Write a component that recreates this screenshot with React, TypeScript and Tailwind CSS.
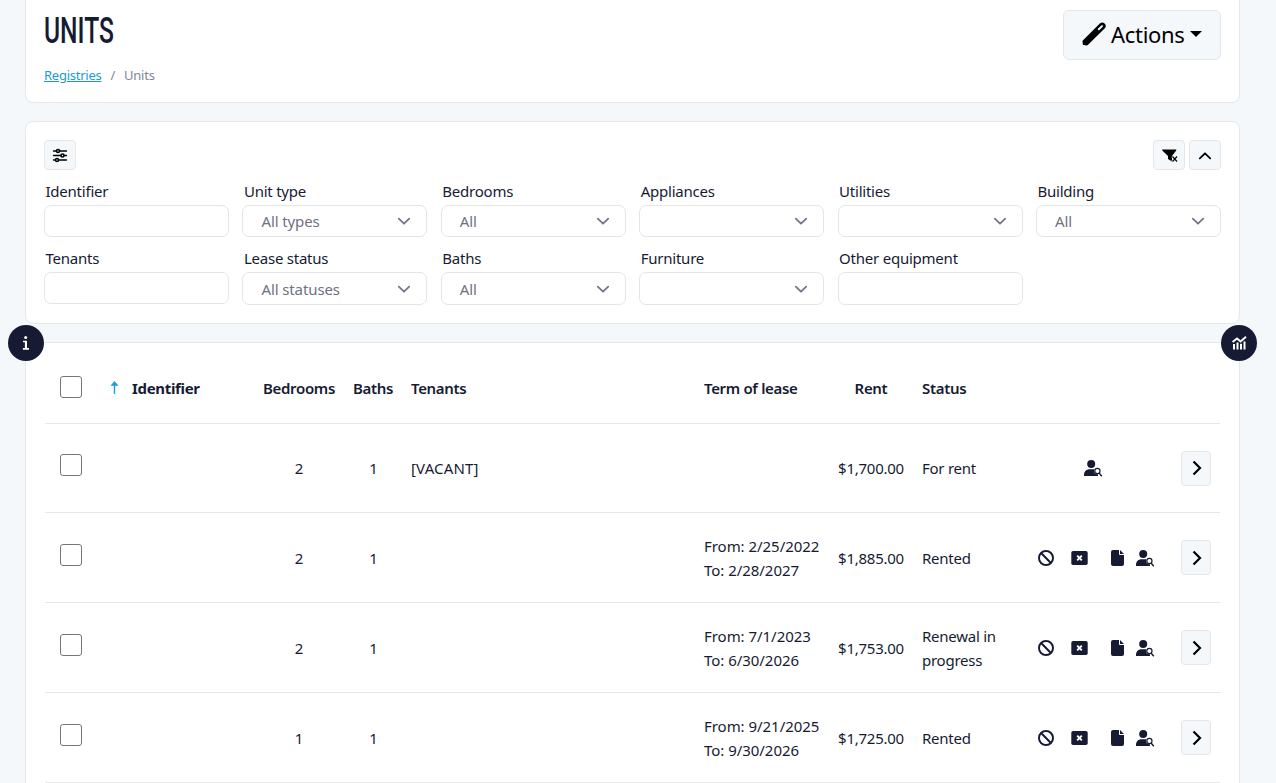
import React from "react";
import { FaBan } from "react-icons/fa6";

const Chevron = ({ className }: { className?: string }) => (
  <svg width="14" height="9" viewBox="0 0 14 9" fill="none" stroke="currentColor" strokeWidth="1.8" strokeLinecap="round" strokeLinejoin="round" className={className}>
    <path d="M1.8 1.6 7 6.700l5.200-5.100" />
  </svg>
);

const Pencil = () => (
  <svg width="24" height="24" viewBox="0 0 24 24" className="shrink-0">
    <path d="M4.200 19.800 20.200 4" stroke="#000" strokeWidth="6.800" strokeLinecap="round" />
    <path d="M.8 23v-5l5.500 5z" fill="#000" />
    <path d="M16.800 7.200 20 4.100" stroke="#f4f8fb" strokeWidth="2" strokeLinecap="round" />
  </svg>
);

const Sliders = () => (
  <svg width="16" height="16" viewBox="0 0 16 16" fill="none" stroke="#000" strokeWidth="1.6" strokeLinecap="round">
    <path d="M1.6 4h2.600M7.800 4h6.600M1.600 8.500h7.200M12.200 8.500h2.200M1.600 13h1.600M6.800 13h7.600" />
    <circle cx="6" cy="4" r="1.500" />
    <circle cx="10.500" cy="8.500" r="1.500" />
    <circle cx="5" cy="13" r="1.500" />
  </svg>
);

const FilterClear = () => (
  <svg width="17" height="14" viewBox="0 0 17 14" className="relative left-px top-px">
    <path d="M.6.5h13.300c.5 0 .6.5.3.9L10 7v5.500L6 10V7L.3 1.400C0 1 .1.500.6.500z" fill="#000" />
    <path d="m10.500 7.500 5 5M15.500 7.500l-5 5" stroke="#f4f8fb" strokeWidth="3" />
    <path d="m10.500 7.500 4.500 5M15 7.500l-4.500 5" stroke="#000" strokeWidth="1.200" />
  </svg>
);

const CancelBox = () => (
  <svg width="17" height="14" viewBox="0 0 17 14">
    <rect x=".3" width="16.400" height="14" rx="1.800" fill="#161b33" />
    <path d="m6.200 4.600 4.600 4.800M10.800 4.600 6.200 9.400" stroke="#fff" strokeWidth="1.900" />
  </svg>
);

const Page = () => (
  <svg width="13" height="16" viewBox="0 0 13 16">
    <path d="M2 0h6v4c0 .6.400 1 1 1h4v9a2 2 0 0 1-2 2H2a2 2 0 0 1-2-2V2a2 2 0 0 1 2-2z" fill="#161b33" />
    <path d="M9 0l4 4H9z" fill="#161b33" />
  </svg>
);

const UserSearch = () => (
  <svg width="19" height="17" viewBox="0 0 19 17">
    <circle cx="7.200" cy="4" r="4" fill="#161b33" />
    <path d="M0 16v-1.300C0 11.500 2.500 9.300 5.500 9.300H9C12 9.300 14 11.500 14 14.700V16z" fill="#161b33" />
    <circle cx="13.400" cy="11" r="3.300" fill="#fff" />
    <circle cx="13.400" cy="11" r="2.600" fill="#fff" stroke="#161b33" strokeWidth="1.200" />
    <path d="m15.200 13.200 2.600 3.100" stroke="#161b33" strokeWidth="1.400" />
  </svg>
);

const Chart = () => (
  <svg width="15" height="14" viewBox="0 0 15 14" fill="none" stroke="#fff">
    <path d="M.6 6.100 5 2.500l3.600 3L14 .8" strokeWidth="1.900" />
    <path d="M2 8v5.500M5.500 6.500v7M9 7.800v5.700M12.500 5.500v8" strokeWidth="2" />
  </svg>
);

const Field = ({ label, value, select, tall }: { label: string; value?: string; select?: boolean; tall?: boolean }) => (
  <div>
    <div className="h-[23px] pl-[1.500px] text-[15px] leading-6 tracking-[-0.23px]">{label}</div>
    <div className={`mt-[3px] flex items-center justify-between rounded-[7px] border border-[#e3e5e9] bg-white pl-[18px] pr-[15px] text-[15px] tracking-[-0.100px] text-[#6f7184] ${tall ? "h-[33px] pt-px" : "h-8"}`}>
      <span className="whitespace-nowrap">{value}</span>
      {select && <Chevron className="text-[#74768a]" />}
    </div>
  </div>
);

const GRID = "mr-px ml-px grid grid-cols-[65px_144px_90px_58px_293px_134px_84px_109px_159px_39px]";

const CheckBox = () => <span className="ml-[15px] block h-[22px] w-[22px] rounded-[3px] border border-[#767676] bg-white" />;

type Unit = { beds: number; tenants?: string; from?: string; to?: string; rent: string; status: string };

const units: Unit[] = [
  { beds: 2, tenants: "[VACANT]", rent: "$1,700.00", status: "For rent" },
  { beds: 2, from: "2/25/2022", to: "2/28/2027", rent: "$1,885.00", status: "Rented" },
  { beds: 2, from: "7/1/2023", to: "6/30/2026", rent: "$1,753.00", status: "Renewal in progress" },
  { beds: 1, from: "9/21/2025", to: "9/30/2026", rent: "$1,725.00", status: "Rented" },
];

const Row = ({ unit, first }: { unit: Unit; first: boolean }) => (
  <div className={`${GRID} items-center border-b border-[#e5e7e9] text-[15px] leading-6 tracking-[-0.25px] ${first ? "h-[89px]" : "h-[90px]"}`}>
    <div className={first ? "pb-[6px]" : "pb-[5px]"}><CheckBox /></div>
    <div />
    <div className="text-center">{unit.beds}</div>
    <div className="pl-px text-center">1</div>
    <div className="pl-[9px] tracking-[0.15px]">{unit.tenants}</div>
    <div className="whitespace-nowrap pl-[9px] tracking-[-0.04px]">
      {unit.from && <div>From: {unit.from}</div>}
      {unit.to && <div>To: {unit.to}</div>}
    </div>
    <div className="text-center">{unit.rent}</div>
    <div className="pl-[9px] pr-4">{unit.status}</div>
    <div className="flex items-center pl-4">
      {unit.from ? (
        <>
          <FaBan className="h-4 w-4" />
          <span className="ml-[17px]"><CancelBox /></span>
          <span className="ml-[23px]"><Page /></span>
          <span className="ml-3 pt-px"><UserSearch /></span>
        </>
      ) : (
        <span className="ml-[46px] pt-px"><UserSearch /></span>
      )}
    </div>
    <button className="flex h-[35px] w-[30px] items-center justify-center rounded-[4px] border border-[#e3e7ea] bg-[#f4f8fb] pl-[2px]">
      <svg width="10" height="16" viewBox="0 0 10 16" fill="none" stroke="#000" strokeWidth="2.200">
        <path d="m1.500 1.500 6.500 6.500-6.500 6.500" />
      </svg>
    </button>
  </div>
);

export default function App() {
  return (
    <div className="relative h-[783px] w-[1276px] overflow-hidden bg-[#f4f8fb] pl-[25px] font-['Noto_Sans',sans-serif] text-[#161b33]">
      <header className="flex h-[103px] w-[1215px] justify-between rounded-b-lg border border-t-0 border-[#e5e7e9] bg-white px-[18px]">
        <div className="w-[200px]">
          <h1 className="mt-[10px] h-[42px] w-[110px] origin-left scale-x-[0.675] whitespace-nowrap font-['Roboto',sans-serif] text-[36.500px] font-medium leading-[42px]">UNITS</h1>
          <nav className="mt-[13px] flex text-[13px] leading-5 tracking-[-0.25px] text-[#82849a]">
            <a className="text-[#1a9ad7] underline">Registries</a>
            <span className="mx-[9px]">/</span>
            <span>Units</span>
          </nav>
        </div>
        <button className="mt-[10px] flex h-[50px] w-[158px] items-center rounded-[6px] border border-[#e3e7ea] bg-[#f4f8fb] pb-[2px] pl-[18px] text-[22px] tracking-[-0.3px] text-black">
          <Pencil />
          <span className="ml-[5px]">Actions</span>
          <span className="ml-[5px] border-x-[6px] border-t-[6px] border-x-transparent border-t-black" />
        </button>
      </header>

      <section className="mt-[18px] h-[203px] w-[1215px] rounded-lg border border-[#e5e7e9] bg-white px-[18px] pt-[18px]">
        <div className="flex h-[30px] gap-1">
          <button className="mr-auto flex w-8 items-center justify-center rounded-[4px] border border-[#e3e7ea] bg-[#f4f8fb]"><Sliders /></button>
          <button className="flex w-8 items-center justify-center rounded-[4px] border border-[#e3e7ea] bg-[#f4f8fb]"><FilterClear /></button>
          <button className="flex w-8 items-center justify-center rounded-[4px] border border-[#e3e7ea] bg-[#f4f8fb]"><Chevron className="rotate-180 text-black" /></button>
        </div>
        <div className="mt-[9px] grid grid-cols-6 gap-x-[13.400px] gap-y-[9px]">
          <Field label="Identifier" />
          <Field label="Unit type" value="All types" select />
          <Field label="Bedrooms" value="All" select />
          <Field label="Appliances" select />
          <Field label="Utilities" select />
          <Field label="Building" value="All" select />
          <Field label="Tenants" />
          <Field label="Lease status" value="All statuses" select tall />
          <Field label="Baths" value="All" select tall />
          <Field label="Furniture" select tall />
          <Field label="Other equipment" tall />
        </div>
      </section>

      <section className="mt-[18px] h-[460px] w-[1215px] rounded-t-lg border border-[#e5e7e9] bg-white px-[18px] pt-[18px]">
        <div className={`${GRID} h-[63px] items-center border-b border-[#e5e7e9] text-[15px] font-semibold leading-6 tracking-[-0.33px]`}>
          <div className="pb-[11px]"><CheckBox /></div>
          <div className="flex items-center pb-[9px]">
            <svg width="9" height="13" viewBox="0 0 9 13" fill="#1d9be0"><path d="M4.500 0 8.500 4.700H5.200V13H3.800V4.700H.500z" /></svg>
            <span className="ml-[13px] font-bold">Identifier</span>
          </div>
          <div className="pb-[9px] text-center">Bedrooms</div>
          <div className="pb-[9px] text-center">Baths</div>
          <div className="pb-[9px] pl-[9px]">Tenants</div>
          <div className="pb-[9px] pl-[9px]">Term of lease</div>
          <div className="pb-[9px] text-center">Rent</div>
          <div className="pb-[9px] pl-[9px]">Status</div>
        </div>
        {units.map((u, i) => <Row key={i} unit={u} first={i === 0} />)}
      </section>

      <div className="absolute left-2 top-[325px] flex h-9 w-9 items-center justify-center rounded-full bg-[#161b33]">
        <svg width="8" height="14" viewBox="0 0 8 14" fill="#fff"><circle cx="3.700" cy="1.600" r="1.500" /><path d="M1 4.700h4V12h2v1.700H.900V12h2V6.300H1z" /></svg>
      </div>
      <div className="absolute left-[1221px] top-[325px] flex h-9 w-9 items-center justify-center rounded-full bg-[#161b33]">
        <Chart />
      </div>
    </div>
  );
}
